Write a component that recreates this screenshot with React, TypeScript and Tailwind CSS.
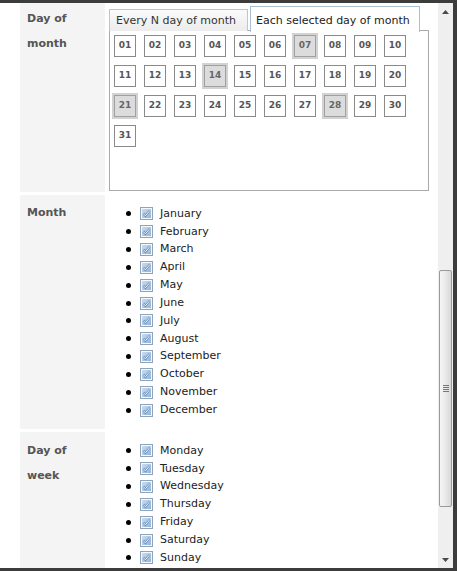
import React from 'react';

const font = { fontFamily: '"DejaVu Sans", Verdana, sans-serif' };

const days = Array.from({ length: 31 }, (_, i) => String(i + 1).padStart(2, '0'));
const selectedDays = ['07', '14', '21', '28'];
const months = ['January', 'February', 'March', 'April', 'May', 'June', 'July', 'August', 'September', 'October', 'November', 'December'];
const weekDays = ['Monday', 'Tuesday', 'Wednesday', 'Thursday', 'Friday', 'Saturday', 'Sunday'];

const CheckBox = () => (
  <svg width="13" height="13" viewBox="0 0 13 13" className="shrink-0">
    <defs>
      <linearGradient id="cbfill" x1="0" y1="0" x2="1" y2="1">
        <stop offset="0" stopColor="#c9dcf0" />
        <stop offset="1" stopColor="#94b4d8" />
      </linearGradient>
    </defs>
    <rect x="0.5" y="0.5" width="12" height="12" fill="#f4f8fc" stroke="#8fa3ba" />
    <rect x="2" y="2" width="9" height="9" fill="url(#cbfill)" />
    <path d="M3.3 6.6 L5.4 8.8 L9.8 3.6" fill="none" stroke="#6a8fbb" strokeWidth="2.2" />
    <path d="M3.3 6.6 L5.4 8.8 L9.8 3.6" fill="none" stroke="#eef5fc" strokeWidth="1" />
  </svg>
);

const CheckList = ({ items }: { items: string[] }) => (
  <ul className="pt-[10px] pb-[10px]">
    {items.map((item) => (
      <li key={item} className="flex items-center h-[17.85px] text-[11px] text-[#222]">
        <span className="ml-[19px] w-[5px] h-[5px] rounded-full bg-black shrink-0" />
        <span className="ml-[9px] flex"><CheckBox /></span>
        <span className="ml-[7px]">{item}</span>
      </li>
    ))}
  </ul>
);

const Label = ({ children, top }: { children: React.ReactNode; top: string }) => (
  <div className={`w-[85px] shrink-0 bg-[#f4f4f4] px-[7px] text-[11px] font-bold leading-[25px] text-[#555] ${top}`}>
    {children}
  </div>
);

const App = () => {
  return (
    <div
      className="w-[457px] h-[571px] overflow-hidden flex bg-white border-t-[3px] border-b-[3px] border-r-[4px] border-[#3c3c3c]"
      style={font}
    >
      <div className="flex-1 overflow-hidden pl-[20px] flex flex-col gap-[3px]">
        {/* day of month */}
        <div className="flex gap-[2px] h-[189px] shrink-0">
          <Label top="pt-[3px]">
            Day of
            <br />
            month
          </Label>
          <div className="pl-[2px] pt-[2px]">
            <div className="flex items-end gap-[2px] h-[26px] relative z-10">
              <div className="h-[22px] w-[139px] border border-b-0 border-[#c4c4c4] bg-gradient-to-b from-[#fafafa] to-[#ececec] pl-[6px] text-[11px] leading-[21px] text-[#333]">
                Every N day of month
              </div>
              <div className="h-[26px] w-[170px] -mb-px border border-b-0 border-[#a9bfd6] bg-white pl-[5px] text-[11px] leading-[27px] text-[#222]">
                Each selected day of month
              </div>
            </div>
            <div className="w-[320px] h-[161px] -mt-px border border-[#a9a9a9] bg-white pt-[4px] pl-[4px]">
              <div className="grid grid-cols-[repeat(10,22px)] gap-[8px]">
                {days.map((d) => {
                  const sel = selectedDays.includes(d);
                  return (
                    <div
                      key={d}
                      className={
                        sel
                          ? 'w-[22px] h-[22px] flex items-center justify-center border border-[#a0a0a0] bg-[#dcdcdc] shadow-[0_0_0_2px_#d2d2d2] text-[9px] font-bold text-[#666]'
                          : 'w-[22px] h-[22px] flex items-center justify-center border border-[#8a8a8a] bg-white text-[9px] font-bold text-[#555]'
                      }
                    >
                      {d}
                    </div>
                  );
                })}
              </div>
            </div>
          </div>
        </div>

        {/* month */}
        <div className="flex gap-[2px] h-[234px] shrink-0">
          <Label top="pt-[5px]">Month</Label>
          <div className="flex-1">
            <CheckList items={months} />
          </div>
        </div>

        {/* day of week */}
        <div className="flex gap-[2px] h-[160px] shrink-0">
          <Label top="pt-[6px]">
            Day of
            <br />
            week
          </Label>
          <div className="flex-1">
            <CheckList items={weekDays} />
          </div>
        </div>
      </div>

      {/* scrollbar */}
      <div className="w-[15px] shrink-0 bg-[#efefef] flex flex-col">
        <div className="h-[17px] flex items-center justify-center">
          <svg width="7" height="4" viewBox="0 0 7 4"><path d="M0 4 L3.5 0 L7 4 Z" fill="#4a4a4a" /></svg>
        </div>
        <div className="flex-1 relative">
          <div className="mt-[250px] h-[237px] mx-[1px] rounded-[2px] border border-[#9a9a9a] bg-gradient-to-r from-[#f6f6f6] via-[#e9e9e9] to-[#d8d8d8] flex items-center justify-center">
            <div className="flex flex-col gap-[1px]">
              <div className="w-[6px] h-px bg-[#777]" />
              <div className="w-[6px] h-px bg-[#777]" />
              <div className="w-[6px] h-px bg-[#777]" />
              <div className="w-[6px] h-px bg-[#777]" />
            </div>
          </div>
        </div>
        <div className="h-[17px] flex items-center justify-center">
          <svg width="7" height="4" viewBox="0 0 7 4"><path d="M0 0 L3.5 4 L7 0 Z" fill="#4a4a4a" /></svg>
        </div>
      </div>
    </div>
  );
};

export default App;
